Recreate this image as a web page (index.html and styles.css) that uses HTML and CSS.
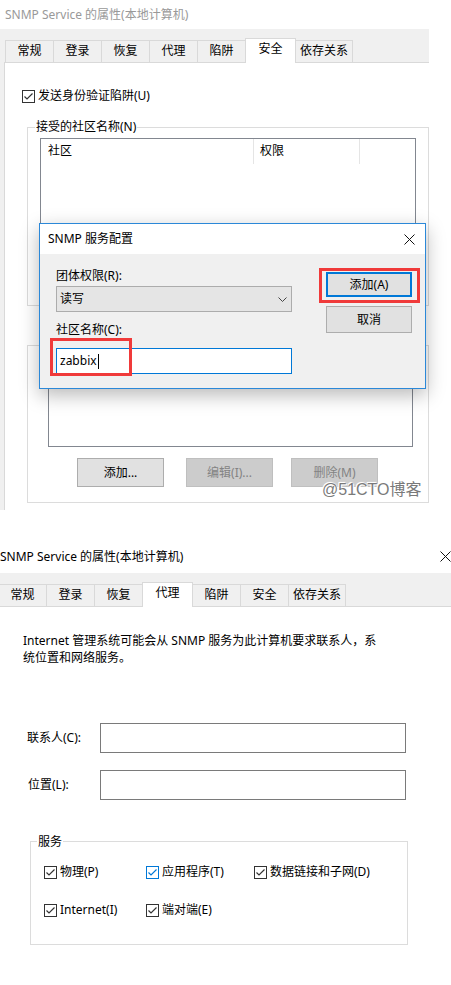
FILE: index.html
```html
<!DOCTYPE html>
<html lang="zh-CN">
<head>
<meta charset="utf-8">
<title>SNMP Service</title>
<link rel="stylesheet" href="styles.css">
</head>
<body>
<div class="shot1">
  <div class="title inactive">SNMP Service 的属性(本地计算机)</div>
  <div class="frame">
    <div class="tabs">
      <div class="tab">常规</div>
      <div class="tab">登录</div>
      <div class="tab">恢复</div>
      <div class="tab">代理</div>
      <div class="tab">陷阱</div>
      <div class="tab sel">安全</div>
      <div class="tab wide">依存关系</div>
    </div>
    <div class="panel">
      <div class="check chk-top"><span class="box"><svg width="11" height="11" viewBox="0 0 11 11"><polyline points="1.5,5.5 4,8 9.5,2.5" fill="none" stroke="#333" stroke-width="1.2"/></svg></span><span>发送身份验证陷阱(U)</span></div>
      <div class="group g1">
        <span class="legend">接受的社区名称(N)</span>
        <div class="list list1">
          <div class="lhead"><span class="c1">社区</span><span class="c2">权限</span></div>
        </div>
      </div>
      <div class="group g2">
        <div class="list list2"></div>
        <div class="btnrow">
          <button class="btn">添加...</button>
          <button class="btn dis b2">编辑(I)...</button>
          <button class="btn dis b3">删除(M)</button>
        </div>
      </div>
    </div>
  </div>
  <div class="watermark">@51CTO博客</div>

  <div class="dialog">
    <div class="dlg-title">
      <span>SNMP 服务配置</span>
      <svg class="x" width="11" height="11" viewBox="0 0 11 11"><path d="M0.5 0.5 L10.5 10.5 M10.5 0.5 L0.5 10.5" stroke="#111" stroke-width="1"/></svg>
    </div>
    <div class="dlg-body">
      <div class="dlg-left">
        <div class="lbl l1">团体权限(R):</div>
        <div class="select"><span>读写</span><svg width="9" height="5" viewBox="0 0 9 5"><polyline points="0.5,0.5 4.5,4.5 8.5,0.5" fill="none" stroke="#444" stroke-width="1"/></svg></div>
        <div class="lbl l2">社区名称(C):</div>
        <div class="input">zabbix<span class="caret"></span></div>
      </div>
      <div class="dlg-right">
        <button class="btn dbtn primary">添加(A)</button>
        <button class="btn dbtn cancel">取消</button>
      </div>
    </div>
    <div class="redbox r1"></div>
    <div class="redbox r2"></div>
  </div>
</div>

<div class="shot2">
  <div class="title t2">
    <span>SNMP Service 的属性(本地计算机)</span>
    <svg class="x2" width="11" height="11" viewBox="0 0 11 11"><path d="M0.5 0.5 L10.5 10.5 M10.5 0.5 L0.5 10.5" stroke="#111" stroke-width="1"/></svg>
  </div>
  <div class="tabs tabs2">
    <div class="tab">常规</div>
    <div class="tab">登录</div>
    <div class="tab">恢复</div>
    <div class="tab sel">代理</div>
    <div class="tab">陷阱</div>
    <div class="tab">安全</div>
    <div class="tab wide">依存关系</div>
  </div>
  <div class="panel2">
    <p class="desc">Internet 管理系统可能会从 SNMP 服务为此计算机要求联系人，系<br>统位置和网络服务。</p>
    <div class="frow r-contact"><span class="flabel">联系人(C):</span><div class="finput"></div></div>
    <div class="frow r-loc"><span class="flabel fl2">位置(L):</span><div class="finput"></div></div>
    <div class="group g3">
      <span class="legend">服务</span>
      <div class="svcgrid">
        <div class="check"><span class="box"><svg width="11" height="11" viewBox="0 0 11 11"><polyline points="1.5,5.5 4,8 9.5,2.5" fill="none" stroke="#333" stroke-width="1.2"/></svg></span><span>物理(P)</span></div>
        <div class="check"><span class="box blue"><svg width="11" height="11" viewBox="0 0 11 11"><polyline points="1.5,5.5 4,8 9.5,2.5" fill="none" stroke="#0078d7" stroke-width="1.2"/></svg></span><span>应用程序(T)</span></div>
        <div class="check"><span class="box"><svg width="11" height="11" viewBox="0 0 11 11"><polyline points="1.5,5.5 4,8 9.5,2.5" fill="none" stroke="#333" stroke-width="1.2"/></svg></span><span>数据链接和子网(D)</span></div>
        <div class="check"><span class="box"><svg width="11" height="11" viewBox="0 0 11 11"><polyline points="1.5,5.5 4,8 9.5,2.5" fill="none" stroke="#333" stroke-width="1.2"/></svg></span><span>Internet(I)</span></div>
        <div class="check"><span class="box"><svg width="11" height="11" viewBox="0 0 11 11"><polyline points="1.5,5.5 4,8 9.5,2.5" fill="none" stroke="#333" stroke-width="1.2"/></svg></span><span>端对端(E)</span></div>
      </div>
    </div>
  </div>
</div>
</body>
</html>
```
FILE: styles.css
```css
* { box-sizing: border-box; }
html, body { margin: 0; padding: 0; background: #fff; }
body {
  width: 451px;
  font-family: "Noto Sans", "Noto Sans CJK SC", sans-serif;
  font-size: 12px;
  line-height: 16px;
  color: #000;
}

/* ---------- shot 1 ---------- */
.shot1 { position: relative; width: 451px; height: 510px; overflow: hidden; }
.title { height: 29px; line-height: 29px; padding-left: 5px; white-space: nowrap; }
.title.inactive { color: #999; }
.frame { width: 429px; height: 481px; background: #f0f0f0; display: flex; flex-direction: column; }

.tabs { display: flex; align-items: flex-end; height: 33px; padding-left: 5px; flex: none; }
.tab {
  width: 49px; height: 22px; margin-left: -1px;
  border: 1px solid #d9d9d9; border-bottom: 0;
  background: #f0f0f0; text-align: center; line-height: 20px; white-space: nowrap;
}
.tab:first-child { margin-left: 0; }
.tab.sel { width: 51px; height: 25px; margin-bottom: -1px; background: #fff; position: relative; z-index: 1; }
.tab.wide { width: 58px; }

.panel { flex: 1; margin-left: 4px; border-top: 1px solid #d9d9d9; border-left: 1px solid #d9d9d9; background: #fff; padding-top: 25px; }

.check { display: flex; align-items: center; gap: 3px; height: 16px; white-space: nowrap; }
.box { width: 13px; height: 13px; border: 1px solid #333; background: #fff; display: block; flex: none; }
.box svg { display: block; }
.box.blue { border-color: #0078d7; }
.chk-top { margin-left: 17px; }

.group { position: relative; border: 1px solid #dcdcdc; }
.legend { position: absolute; top: -9px; left: 7px; padding: 0 1px; background: #fff; line-height: 16px; white-space: nowrap; }
.g1 { margin: 23px 0 0 22px; width: 402px; height: 179px; }
.g2 { margin: 39px 0 0 22px; width: 402px; height: 158px; }

.list { background: #fff; border: 1px solid #828790; }
.list1 { margin: 10px 0 0 12px; width: 376px; height: 115px; }
.list2 { margin: 14px 0 0 20px; width: 365px; height: 87px; }
.lhead { display: flex; height: 25px; line-height: 24px; }
.lhead span { border-right: 1px solid #e5e5e5; padding-left: 7px; }
.lhead .c1 { width: 213px; }
.lhead .c2 { width: 106px; padding-left: 6px; }

.btnrow { display: flex; margin: 11px 0 0 49px; }
.btn {
  width: 87px; height: 29px; padding: 0;
  border: 1px solid #adadad; background: #e1e1e1;
  font: inherit; color: #000; line-height: 16px;
}
.btn.dis { background: #cccccc; border-color: #bfbfbf; color: #838383; }
.b2 { margin-left: 22px; }
.b3 { margin-left: 18px; }

.watermark {
  position: absolute; left: 322px; top: 481px;
  font-family: "Liberation Sans", "Noto Sans CJK SC", sans-serif;
  font-size: 16px; line-height: 18px; color: #7a7a7a;
  text-shadow: 0 0 2px #fff, 0 0 2px #fff, 1px 1px 0 #fff, -1px -1px 0 #fff;
  white-space: nowrap;
}

/* dialog */
.dialog {
  position: absolute; left: 39px; top: 223px; width: 387px; height: 166px;
  border: 1px solid #2b88d8; background: #f0f0f0;
  box-shadow: 0 6px 18px rgba(0, 0, 0, 0.28);
  z-index: 2;
}
.dlg-title { height: 30px; background: #fff; display: flex; align-items: center; justify-content: space-between; padding: 0 10px 0 8px; }
.dlg-title .x { display: block; }
.dlg-body { display: flex; padding-left: 16px; }
.dlg-left { width: 236px; }
.lbl { height: 16px; white-space: nowrap; }
.l1 { margin-top: 14px; }
.l2 { margin-top: 10px; }
.select {
  margin-top: 2px; height: 26px; border: 1px solid #acacac; background: #e5e5e5;
  display: flex; align-items: center; justify-content: space-between; padding: 0 4px 0 3px;
}
.input {
  margin-top: 10px; height: 26px; border: 1px solid #0078d7; background: #fff;
  display: flex; align-items: center; padding-left: 3px;
}
.caret { display: inline-block; width: 1px; height: 15px; background: #000; margin-left: 1px; }
.dlg-right { margin-left: 34px; display: flex; flex-direction: column; }
.dbtn { width: 86px; }
.primary { margin-top: 18px; height: 25px; border: 2px solid #0078d7; }
.cancel { margin-top: 9px; height: 27px; }
.redbox { position: absolute; border: 3px solid #f03a3a; }
.r1 { left: 279px; top: 44px; width: 101px; height: 35px; }
.r2 { left: 10px; top: 114px; width: 82px; height: 38px; }

/* ---------- shot 2 ---------- */
.shot2 { margin-top: 30px; width: 451px; height: 445px; overflow: hidden; }
.t2 { height: 33px; line-height: 33px; padding-left: 0; display: flex; justify-content: space-between; align-items: center; }
.x2 { display: block; margin-right: 0; }
.tabs2 { background: #f0f0f0; padding-left: 0; }
.tabs2 .tab:first-child { margin-left: -2px; }
.panel2 { border-top: 1px solid #d9d9d9; background: #fff; padding-top: 25px; }
.desc { margin: 0; padding-left: 23px; line-height: 17px; white-space: nowrap; }
.frow { display: flex; align-items: center; }
.r-contact { margin-top: 57px; }
.r-loc { margin-top: 17px; }
.flabel { width: 100px; padding-left: 27px; white-space: nowrap; }
.fl2 { padding-left: 28px; }
.finput { width: 306px; height: 30px; border: 1px solid #7a7a7a; background: #fff; }
.g3 { margin: 41px 0 0 30px; width: 378px; height: 104px; }
.g3 .legend { top: -8px; left: 6px; }
.svcgrid { display: grid; grid-template-columns: 102px 108px auto; row-gap: 22px; padding: 22px 0 0 13px; }
```
